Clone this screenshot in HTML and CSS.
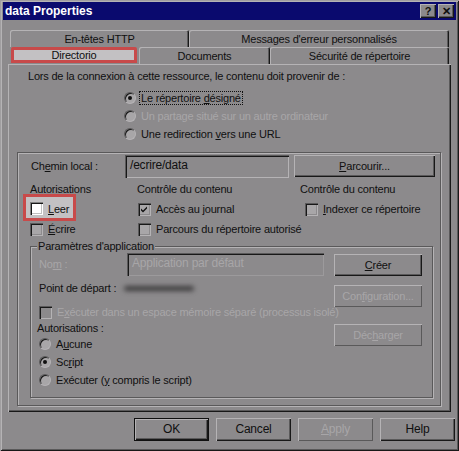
FILE: index.html
```html
<!DOCTYPE html>
<html lang="fr">
<head>
  <meta charset="UTF-8">
  <title>data Properties</title>
  <link rel="stylesheet" href="styles.css">
</head>
<body>
<div class="window">
  <div class="titlebar">
    <span class="title">data Properties</span>
    <span class="tbtns"><span class="tbtn">?</span><span class="tbtn">&#x2715;</span></span>
  </div>

  <div class="tabs">
    <div class="tabrow">
      <div class="tab t-http">En-têtes HTTP</div>
      <div class="tab t-msg">Messages d'erreur personnalisés</div>
    </div>
    <div class="tabrow">
      <div class="tab t-dir active">Directorio</div>
      <div class="tab t-doc">Documents</div>
      <div class="tab t-sec">Sécurité de répertoire</div>
    </div>
  </div>

  <div class="panel">
    <div class="intro">Lors de la connexion à cette ressource, le contenu doit provenir de :</div>
    <div class="sources">
      <div class="row"><span class="rb on"></span><span class="lbl focus">Le répertoire <u>d</u>ésigné</span></div>
      <div class="row off"><span class="rb"></span><span class="lbl">Un partage situé sur un autre ordinateur</span></div>
      <div class="row"><span class="rb"></span><span class="lbl">Une redirection <u>v</u>ers une URL</span></div>
    </div>

    <div class="group outer">
      <div class="path-row">
        <span class="path-lbl">Ch<u>e</u>min local :</span>
        <span class="field path">/ecrire/data</span>
        <span class="btn browse"><u>P</u>arcourir...</span>
      </div>

      <div class="perm-head">
        <span>Autorisations</span>
        <span>Contrôle du contenu</span>
        <span class="c3">Contrôle du contenu</span>
      </div>
      <div class="perm-grid">
        <div class="cell"><span class="mark"><span class="cb white"></span><span class="lbl"><u>L</u>eer</span></span></div>
        <div class="cell"><span class="cb checked"><svg width="13" height="13" viewBox="0 0 13 13"><path d="M3 5.5l2 2 4-4v2l-4 4-2-2z" fill="#101010"/></svg></span><span class="lbl">Accès au journal</span></div>
        <div class="cell c3"><span class="cb"></span><span class="lbl"><u>I</u>ndexer ce répertoire</span></div>
        <div class="cell"><span class="cb"></span><span class="lbl"><u>É</u>crire</span></div>
        <div class="cell"><span class="cb"></span><span class="lbl">Parcours du répertoire autorisé</span></div>
      </div>

      <div class="group app">
        <div class="legend">Paramètres d'application</div>
        <div class="app-body">
          <div class="app-left">
            <div class="name-row">
              <span class="name-lbl off">No<u>m</u> :</span>
              <span class="field name off">Application par défaut</span>
            </div>
            <div class="start-row">Point de départ : <span class="smudge"></span></div>
            <div class="isolate off"><span class="cb dis"></span><span class="lbl">E<u>x</u>écuter dans un espace mémoire séparé (processus isolé)</span></div>
            <div class="auth-lbl">Autorisations :</div>
            <div class="row"><span class="rb"></span><span class="lbl">A<u>u</u>cune</span></div>
            <div class="row"><span class="rb on"></span><span class="lbl">Sc<u>r</u>ipt</span></div>
            <div class="row"><span class="rb"></span><span class="lbl">Exécuter (<u>y</u> compris le script)</span></div>
          </div>
          <div class="app-right">
            <span class="btn create"><u>C</u>réer</span>
            <span class="btn config off">Con<u>f</u>iguration...</span>
            <span class="btn unload off">Déc<u>h</u>arger</span>
          </div>
        </div>
      </div>
    </div>
  </div>

  <div class="footer">
    <span class="btn default">OK</span>
    <span class="btn">Cancel</span>
    <span class="btn off"><u>A</u>pply</span>
    <span class="btn">Help</span>
  </div>
</div>
</body>
</html>
```

FILE: styles.css
```css
body {
  margin: 0;
  font-family: "Liberation Sans", Arial, sans-serif;
  font-size: 11px;
  letter-spacing: -0.2px;
  color: #101010;
}
u {
  text-decoration-thickness: 1px;
  text-underline-offset: 1px;
}

.window {
  width: 459px;
  height: 451px;
  box-sizing: border-box;
  padding: 2px 3px 3px 3px;
  background: #8c8a8c;
  box-shadow: inset 1px 1px 0 #a09ea0, inset -1px -1px 0 #181818,
              inset 2px 2px 0 #b5b3b5, inset -2px -2px 0 #5a595a;
}

.titlebar {
  height: 18px;
  background: #0a0a6e;
  display: flex;
  align-items: center;
  justify-content: space-between;
  padding: 0 2px 0 2px;
}
.title {
  color: #fff;
  font-weight: bold;
  font-size: 12px;
  letter-spacing: 0;
}
.tbtns {
  display: flex;
  gap: 2px;
}
.tbtn {
  width: 16px;
  height: 14px;
  box-sizing: border-box;
  background: #8c8a8c;
  display: flex;
  align-items: center;
  justify-content: center;
  font-weight: bold;
  font-size: 11px;
  line-height: 1;
  box-shadow: inset 1px 1px 0 #b5b3b5, inset -1px -1px 0 #181818, inset -2px -2px 0 #5a595a;
}

.tabs {
  margin: 10px 0 0 7px;
}
.tabrow {
  display: flex;
}
.tab {
  box-sizing: border-box;
  height: 17px;
  padding-top: 1px;
  text-align: center;
  line-height: 17px;
  border-radius: 2px 2px 0 0;
  box-shadow: inset 1px 1px 0 #b5b3b5, inset -1px 0 0 #181818, inset -2px 0 0 #5a595a;
}
.t-http { width: 179px; }
.t-msg { width: 260px; }
.t-dir { width: 129px; }
.t-doc { width: 131px; }
.t-sec { width: 179px; }
.tab.active {
  background: #c3c1c3;
  border: 3px solid #c84a4a;
  padding-top: 0;
  line-height: 11px;
  height: 16px;
  margin: 0 2px 1px 1px;
  width: 126px;
  box-shadow: none;
}

.panel {
  margin-left: 5px;
  width: 443px;
  height: 348px;
  box-sizing: border-box;
  overflow: hidden;
  box-shadow: inset 1px 1px 0 #b5b3b5, inset -1px -1px 0 #181818, inset -2px -2px 0 #5a595a;
}
.intro {
  margin: 6px 0 0 20px;
  line-height: 13px;
}
.sources {
  margin: 6px 0 0 116px;
}
.row {
  display: flex;
  align-items: center;
  height: 18px;
}
.off, .off .lbl {
  color: #a8a6a8;
}
.lbl {
  margin-left: 5px;
  white-space: nowrap;
}
.focus {
  outline: 1px dotted #101010;
  padding: 0 1px;
  margin-left: 4px;
}

.rb {
  position: relative;
  width: 12px;
  height: 12px;
  flex: none;
  box-sizing: border-box;
  border-radius: 50%;
  background: #a8a6a8;
  border: 1px solid;
  border-color: #5a595a #b5b3b5 #b5b3b5 #5a595a;
  box-shadow: inset 1px 1px 0 #181818;
}
.rb.on::after {
  content: "";
  position: absolute;
  left: 3px;
  top: 3px;
  width: 4px;
  height: 4px;
  border-radius: 50%;
  background: #101010;
}

.cb {
  width: 13px;
  height: 13px;
  flex: none;
  box-sizing: border-box;
  background: #a8a6a8;
  box-shadow: inset 1px 1px 0 #5a595a, inset 2px 2px 0 #181818,
              inset -1px -1px 0 #b5b3b5, inset -2px -2px 0 #8c8a8c;
}
.cb svg {
  display: block;
}
.cb.white {
  background: #fff;
  box-shadow: inset 1px 1px 0 #808080, inset 2px 2px 0 #181818,
              inset -1px -1px 0 #fff, inset -2px -2px 0 #c0c0c0;
}
.cb.dis {
  background: #8c8a8c;
}

.group {
  box-sizing: border-box;
  border: 1px solid #5a595a;
  box-shadow: inset 1px 1px 0 #b5b3b5, 1px 1px 0 #b5b3b5;
}
.outer {
  margin: 9px 0 0 9px;
  width: 424px;
  height: 254px;
}

.path-row {
  display: flex;
  align-items: flex-start;
  margin-top: 2px;
}
.path-lbl {
  width: 94px;
  padding-left: 13px;
  line-height: 23px;
  flex: none;
}
.field {
  box-sizing: border-box;
  height: 23px;
  line-height: 21px;
  padding-left: 5px;
  box-shadow: inset 1px 1px 0 #5a595a, inset 2px 2px 0 #181818,
              inset -1px -1px 0 #b5b3b5;
}
.path {
  width: 164px;
  font-size: 12px;
}

.btn {
  box-sizing: border-box;
  display: inline-block;
  height: 22px;
  line-height: 22px;
  text-align: center;
  box-shadow: inset 1px 1px 0 #b5b3b5, inset -1px -1px 0 #181818, inset -2px -2px 0 #5a595a;
}
.btn.off {
  box-shadow: inset 1px 1px 0 #b5b3b5, inset -1px -1px 0 #5a595a;
}
.browse {
  width: 141px;
  margin-left: 5px;
}

.perm-head {
  display: grid;
  grid-template-columns: 107px 163px auto;
  margin: 5px 0 0 12px;
  line-height: 13px;
}
.perm-grid {
  display: grid;
  grid-template-columns: 108px 163px auto;
  margin: 3px 0 0 12px;
}
.cell {
  display: flex;
  align-items: center;
  height: 20px;
}
.cell.c3 {
  padding-left: 4px;
}
.mark {
  display: flex;
  align-items: center;
  box-sizing: border-box;
  height: 27px;
  width: 53px;
  margin: -5px 0 -2px -7px;
  padding: 2px 0 0 4px;
  background: #c3c1c3;
  border: 3px solid #c84a4a;
}

.app {
  margin: 7px 0 0 12px;
  width: 403px;
  height: 152px;
}
.legend {
  width: fit-content;
  margin: -7px 0 0 6px;
  padding: 0 1px;
  line-height: 13px;
  background: #8c8a8c;
}
.app-body {
  display: flex;
  padding-left: 8px;
}
.app-left {
  width: 295px;
}
.name-row {
  display: flex;
}
.name-lbl {
  width: 88px;
  line-height: 23px;
}
.name {
  width: 197px;
  font-size: 12px;
  box-shadow: inset 1px 1px 0 #5a595a, inset 2px 2px 0 #181818,
              inset -1px -1px 0 #9c9a9c;
}
.start-row {
  margin-top: 5px;
  height: 14px;
  display: flex;
  align-items: center;
}
.smudge {
  display: inline-block;
  width: 70px;
  height: 5px;
  margin-left: 8px;
  background: #3c3b3c;
  border-radius: 3px;
  filter: blur(2.5px);
}
.isolate {
  display: flex;
  align-items: center;
  margin-top: 10px;
  height: 14px;
}
.auth-lbl {
  margin: 2px 0 0 -2px;
  line-height: 14px;
}
.app-right {
  display: flex;
  flex-direction: column;
  padding-top: 1px;
}
.app-right .btn {
  width: 88px;
}
.config {
  margin-top: 9px;
}
.unload {
  margin-top: 17px;
}

.footer {
  display: flex;
  justify-content: flex-end;
  gap: 7px;
  margin: 6px 1px 0 0;
}
.footer .btn {
  width: 75px;
  height: 23px;
  line-height: 23px;
  font-size: 12px;
}
.footer .default {
  box-shadow: inset 0 0 0 1px #101010, inset 2px 2px 0 #b5b3b5,
              inset -2px -2px 0 #181818, inset -3px -3px 0 #5a595a;
}
```
